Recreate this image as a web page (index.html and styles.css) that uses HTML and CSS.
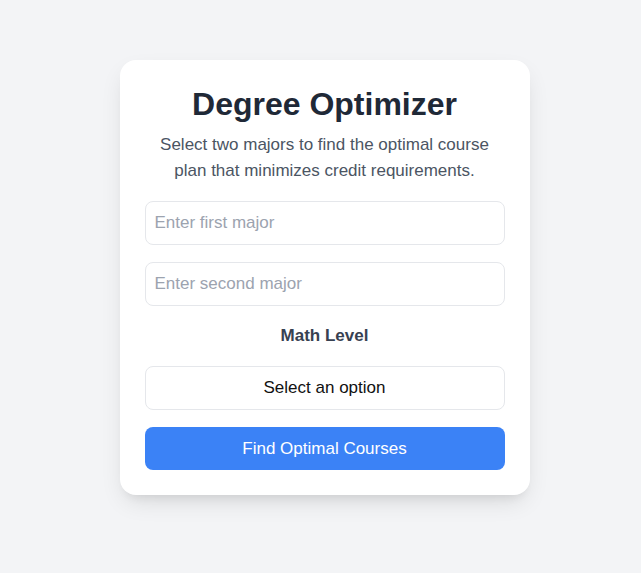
FILE: index.html
```html
<!DOCTYPE html>
<html>
<head>
<meta charset="utf-8">
<link rel="stylesheet" href="styles.css">
</head>
<body>
<main class="page">
  <section class="card">
    <h1 class="title">Degree Optimizer</h1>
    <p class="subtitle">Select two majors to find the optimal course plan that minimizes credit requirements.</p>
    <div class="form">
      <input class="field" type="text" placeholder="Enter first major">
      <input class="field" type="text" placeholder="Enter second major">
      <div class="label">Math Level</div>
      <div class="select">Select an option</div>
      <button class="btn">Find Optimal Courses</button>
    </div>
  </section>
</main>
</body>
</html>
```
FILE: styles.css
```css
* { box-sizing: border-box; }
html, body { margin: 0; padding: 0; }
body {
  background: #f3f4f6;
  font-family: "Liberation Sans", Arial, sans-serif;
  width: 641px;
  height: 573px;
  overflow: hidden;
}
.page {
  display: flex;
  justify-content: center;
  padding: 60px 0 0 8px;
}
.card {
  width: 410px;
  background: #ffffff;
  border-radius: 16px;
  padding: 25px 25px 25px 25px;
  box-shadow: 0 10px 25px -5px rgba(0,0,0,0.12), 0 8px 10px -6px rgba(0,0,0,0.08);
}
.title {
  margin: 0;
  text-align: center;
  font-size: 32px;
  line-height: 38px;
  font-weight: 700;
  color: #1f2937;
}
.subtitle {
  margin: 9px 0 0;
  text-align: center;
  font-size: 17px;
  line-height: 26px;
  color: #4b5563;
}
.form {
  margin-top: 17px;
  display: flex;
  flex-direction: column;
  gap: 17px;
}
.field {
  display: block;
  width: 100%;
  height: 44px;
  border: 1px solid #e5e7eb;
  border-radius: 8px;
  padding: 0 9px;
  font-family: inherit;
  font-size: 17px;
  color: #111827;
  background: #fff;
  outline: none;
}
.field::placeholder { color: #9ca3af; }
.label {
  text-align: center;
  font-weight: 700;
  font-size: 17px;
  line-height: 26px;
  color: #374151;
}
.select {
  height: 44px;
  border: 1px solid #e5e7eb;
  border-radius: 8px;
  display: flex;
  align-items: center;
  justify-content: center;
  font-size: 17px;
  color: #111111;
}
.btn {
  height: 43px;
  border: none;
  border-radius: 8px;
  background: #3b82f6;
  color: #ffffff;
  font-family: inherit;
  font-size: 17px;
}
```
